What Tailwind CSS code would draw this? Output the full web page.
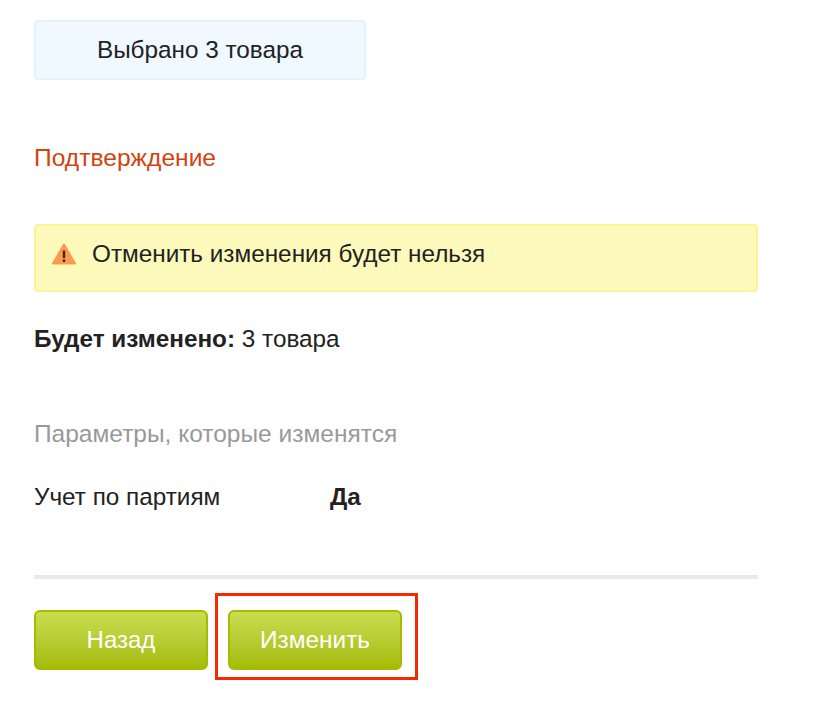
<!DOCTYPE html>
<html lang="ru">
<head>
<meta charset="utf-8">
<script src="https://cdn.jsdelivr.net/npm/@tailwindcss/browser@4"></script>
</head>
<body class="bg-white">
<main class="relative h-[704px] w-[818px] overflow-hidden pl-[34px] pt-[20px] font-['Liberation_Sans',Arial,sans-serif] text-[24.3px] leading-[30px] text-[#222]">
  <div class="flex h-[60px] w-[332px] items-center justify-center rounded-[4px] border-2 border-[#e3f3fe] bg-[#f0f9ff]">Выбрано 3 товара</div>
  <h2 class="mt-[63px] text-[24.6px] font-normal leading-[30px] text-[#d2430f]">Подтверждение</h2>
  <div class="mt-[51px] flex h-[68px] w-[724px] items-start gap-[16px] rounded-[4px] border-2 border-[#fdf295] bg-[#fefabc] pl-[16px] pt-[13px]">
    <svg class="mt-[3px] h-[24px] w-[24px] shrink-0" viewBox="0 0 24 24" aria-hidden="true">
      <path d="M12 2.5 L23 21.5 H1 Z" fill="#fc9a4f" stroke="#fc9a4f" stroke-width="2" stroke-linejoin="round"/>
      <rect x="10.8" y="8.5" width="2.4" height="7.5" fill="#3a2a1a"/>
      <rect x="10.8" y="17.4" width="2.4" height="2.6" fill="#3a2a1a"/>
    </svg>
    <span>Отменить изменения будет нельзя</span>
  </div>
  <p class="mt-[32px]"><b class="font-bold">Будет изменено:</b> 3 товара</p>
  <h3 class="mt-[65px] text-[24.5px] font-normal leading-[30px] text-[#999]">Параметры, которые изменятся</h3>
  <div class="mt-[33px] flex">
    <span class="w-[296px]">Учет по партиям</span>
    <b class="font-bold">Да</b>
  </div>
  <hr class="mt-[63px] h-[4px] w-[724px] border-0 bg-[#e9e9e9]">
  <div class="mt-[31px] flex gap-[20px]">
    <button class="h-[60px] w-[174px] rounded-[6px] border-2 border-[#a5bc00] bg-gradient-to-b from-[#c8de4e] to-[#a5bc00] text-[24px] text-white">Назад</button>
    <button class="h-[60px] w-[174px] rounded-[6px] border-2 border-[#a5bc00] bg-gradient-to-b from-[#c8de4e] to-[#a5bc00] text-[24.4px] text-white">Изменить</button>
  </div>
  <div class="absolute left-[215px] top-[593px] h-[87px] w-[203px] border-[3px] border-[#f52a00]"></div>
</main>
</body>
</html>
